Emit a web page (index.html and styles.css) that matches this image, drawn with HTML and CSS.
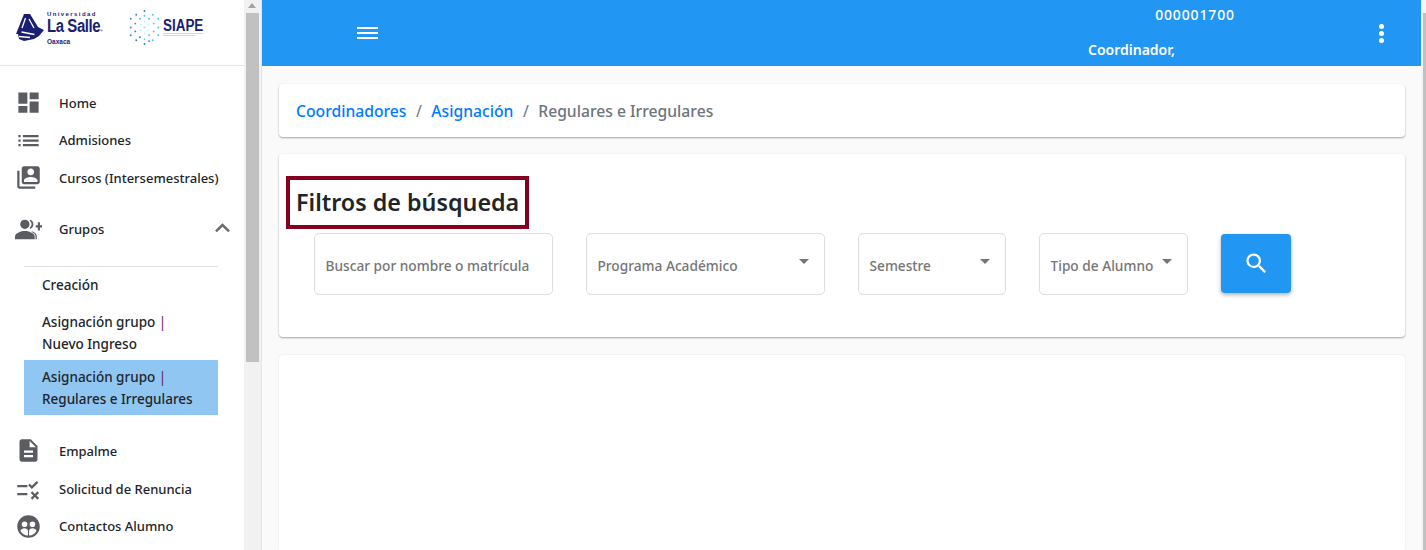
FILE: index.html
```html
<!DOCTYPE html>
<html lang="es">
<head>
<meta charset="utf-8">
<title>SIAPE</title>
<link rel="stylesheet" href="styles.css">
</head>
<body>
<div class="app">
  <aside class="sidebar">
    <div class="side-scroll">
      <div class="logos">
        <svg class="logo-ls" width="28" height="27" viewBox="0 0 28 27">
          <path fill="#1b1f73" d="M8 0h6l8 13 6 3-5 6-5 3-10 2-5-2-1-5H0l2-5z"/>
          <path fill="none" stroke="#fff" stroke-width="1.300" d="M9.500 4 6 14M13 5l5 9M5.500 18l13 2.500M3 22.500l11 1"/>
        </svg>
        <div class="ls-text">
          <span class="ls-uni">Universidad</span>
          <span class="ls-name">La Salle<small>®</small></span>
          <span class="ls-city">Oaxaca</span>
        </div>
        <svg class="logo-dots" width="33" height="37" viewBox="0 0 36 38" preserveAspectRatio="none">
          <g fill="#2f7fd0"><circle cx="18" cy="2" r="1"/><circle cx="18" cy="36" r="1"/><circle cx="3" cy="10" r="1"/><circle cx="3" cy="19" r="1"/><circle cx="3" cy="27" r="1"/><circle cx="9" cy="6" r="1"/><circle cx="9" cy="32" r="1"/><circle cx="8" cy="15" r="1"/><circle cx="8" cy="23" r="1"/><circle cx="13" cy="29" r="1"/><circle cx="23" cy="33" r="1"/></g>
          <g fill="#35c9ee"><circle cx="27" cy="6" r="1"/><circle cx="33" cy="10" r="1"/><circle cx="33" cy="19" r="1"/><circle cx="33" cy="27" r="1"/><circle cx="27" cy="32" r="1"/><circle cx="18" cy="7" r="1"/><circle cx="28" cy="15" r="1"/><circle cx="28" cy="23" r="1"/><circle cx="23" cy="10" r="1"/><circle cx="13" cy="10" r="1"/><circle cx="23" cy="27" r="1"/><circle cx="18" cy="31" r=".8"/></g>
          <g fill="#8fe3f2"><circle cx="18" cy="13" r=".7"/><circle cx="14" cy="16" r=".7"/><circle cx="22" cy="16" r=".7"/><circle cx="18" cy="19" r="1"/><circle cx="14" cy="22" r=".7"/><circle cx="22" cy="22" r=".7"/><circle cx="18" cy="25" r=".7"/></g>
        </svg>
        <div class="siape">
          <span class="siape-name">SIAPE</span>
          <span class="siape-line"></span>
          <span class="siape-line short"></span>
        </div>
      </div>

      <nav class="menu">
        <a class="item">
          <svg class="ico" viewBox="0 0 24 24"><path d="M3 13h8V3H3zm0 8h8v-6H3zm10 0h8V11h-8zm0-18v6h8V3z"/></svg>
          <span>Home</span>
        </a>
        <a class="item">
          <svg class="ico" viewBox="0 0 24 24"><path d="M3 13h2v-2H3zm0 4h2v-2H3zm0-8h2V7H3zm4 4h14v-2H7zm0 4h14v-2H7zM7 7v2h14V7z"/></svg>
          <span>Admisiones</span>
        </a>
        <a class="item">
          <svg class="ico" viewBox="0 0 24 24"><path d="M4 6H2v14c0 1.100.9 2 2 2h14v-2H4zm16-4H8c-1.100 0-2 .9-2 2v12c0 1.100.9 2 2 2h12c1.100 0 2-.9 2-2V4c0-1.100-.9-2-2-2zm-6 2c1.660 0 3 1.340 3 3s-1.340 3-3 3-3-1.340-3-3 1.340-3 3-3zm6 12H8v-1.500c0-1.990 4-3 6-3s6 1.010 6 3z"/></svg>
          <span>Cursos (Intersemestrales)</span>
        </a>
        <a class="item group">
          <svg class="ico" viewBox="0 0 26 24"><path d="M9.500 11.500a4.500 4.500 0 1 0 0-9 4.500 4.500 0 0 0 0 9zM0 21.500h19v-2.800c0-3.400-6.200-5.200-9.500-5.200S0 15.300 0 18.700z"/><path d="M14.800 2.600a4.800 4.800 0 0 1 0 8.800l-.7-1a4 4 0 0 0 0-6.800zM16 13.700c2.600.8 5 2.300 5 5v2.800h-1.200v-2.800c0-2-1.800-3.600-3.800-4.200zM22 8V5h2v3h2v2h-2v3h-2v-3h-2V8z"/></svg>
          <span class="grow">Grupos</span>
          <svg class="chev" viewBox="0 0 24 24"><path d="M12 7 3.500 15.500l2 2L12 11l6.500 6.500 2-2z"/></svg>
        </a>
        <div class="submenu">
          <a class="sub single">Creación</a>
          <a class="sub">Asignación grupo <i>|</i><br>Nuevo Ingreso</a>
          <a class="sub active">Asignación grupo <i>|</i><br>Regulares e Irregulares</a>
        </div>
        <a class="item after">
          <svg class="ico" viewBox="0 0 24 24"><path d="M14 2H6c-1.100 0-2 .9-2 2v16c0 1.100.9 2 2 2h12c1.100 0 2-.9 2-2V8zm2 16H8v-2h8zm0-4H8v-2h8zm-3-5V3.500L18.500 9z"/></svg>
          <span>Empalme</span>
        </a>
        <a class="item renuncia">
          <svg class="ico" viewBox="0 0 24 24"><path d="M2 8h9v2H2zm0 7h9v2H2zM15 11.500 11.700 8.200l1.400-1.400 1.900 1.900 4.300-4.200 1.400 1.400zM15.400 21l-1.400-1.400 2.300-2.300-2.300-2.300 1.400-1.400 2.300 2.300 2.300-2.300 1.400 1.400-2.300 2.300 2.300 2.300-1.400 1.400-2.300-2.300z"/></svg>
          <span>Solicitud de Renuncia</span>
        </a>
        <a class="item">
          <svg class="ico" viewBox="0 0 24 24"><path fill-rule="evenodd" d="M12 2a10 10 0 1 0 0 20 10 10 0 0 0 0-20zM8.500 7.500a2.500 2.500 0 1 1 0 5 2.500 2.500 0 0 1 0-5zm7 0a2.500 2.500 0 1 1 0 5 2.500 2.500 0 0 1 0-5zM4.800 15.800c.5-1.400 2.200-2.200 3.700-2.200s2.800.8 3 2.200v4.300a8.300 8.300 0 0 1-6.700-4.300zm7.700 4.300v-4.300c.2-1.400 1.500-2.200 3-2.200s3.200.8 3.700 2.200a8.300 8.300 0 0 1-6.700 4.300z"/></svg>
          <span>Contactos Alumno</span>
        </a>
      </nav>
    </div>
    <div class="scrollbar side-bar">
      <span class="arrow"></span>
      <span class="thumb"></span>
    </div>
  </aside>

  <div class="main">
    <header class="topbar">
      <button class="burger" aria-label="Menú"><span></span><span></span><span></span></button>
      <div class="user">
        <div class="user-id">000001700</div>
        <div class="user-role">Coordinador,</div>
      </div>
      <div class="kebab"><span></span><span></span><span></span></div>
    </header>

    <div class="content">
      <div class="card crumbs">
        <a>Coordinadores</a><em>/</em><a>Asignación</a><em>/</em><b>Regulares e Irregulares</b>
      </div>

      <section class="card filters">
        <h1 class="title">Filtros de búsqueda</h1>
        <div class="row">
          <div class="field f-search"><span>Buscar por nombre o matrícula</span></div>
          <div class="field f-prog"><span>Programa Académico</span><i class="caret"></i></div>
          <div class="field f-sem"><span>Semestre</span><i class="caret"></i></div>
          <div class="field f-tipo"><span>Tipo de Alumno</span><i class="caret"></i></div>
          <button class="search" aria-label="Buscar">
            <svg viewBox="0 0 24 24" width="27" height="27"><path fill="#fff" d="M15.500 14h-.79l-.28-.27A6.471 6.471 0 0 0 16 9.500 6.500 6.500 0 1 0 9.500 16c1.610 0 3.090-.59 4.230-1.570l.27.28v.79l5 4.990L20.490 19l-4.990-5zm-6 0C7.010 14 5 11.990 5 9.500S7.010 5 9.500 5 14 7.010 14 9.500 11.990 14 9.500 14z"/></svg>
          </button>
        </div>
      </section>

      <section class="card results"></section>
    </div>
  </div>

  <div class="scrollbar page-bar"><span class="page-thumb"></span></div>
</div>
</body>
</html>
```

FILE: styles.css
```css
* { box-sizing: border-box; }
html, body { margin: 0; height: 100%; overflow: hidden; }
body { font-family: "Noto Sans", "Open Sans", sans-serif; color: #212529; background: #fafafa; }

.app { display: flex; height: 550px; }

.sidebar { display: flex; flex: 0 0 262px; background: #fff; height: 550px; overflow: hidden; }
.side-scroll { flex: 0 0 244px; min-width: 0; }

.logos { height: 66px; display: flex; align-items: center; padding: 0 0 10px 16px; border-bottom: 1px solid #e5e5e5; }
.logo-ls { flex: none; margin-right: 3px; }
.ls-text { display: flex; flex-direction: column; color: #1b1f73; width: 81px; margin-top: 1px; font-family: "Liberation Sans", sans-serif; }
.ls-uni { font-size: 6px; letter-spacing: 1.400px; line-height: 9px; font-weight: 700; }
.ls-name { display: block; font-size: 18px; line-height: 15px; letter-spacing: -.5px; font-weight: 700; white-space: nowrap; transform: scaleX(.83); transform-origin: left center; }
.ls-name small { font-size: 4px; }
.ls-city { font-size: 6.500px; line-height: 8px; font-weight: 700; }
.logo-dots { flex: none; margin-right: 2px; }
.siape { display: flex; flex-direction: column; gap: 1px; }
.siape-name { display: block; font-family: "Liberation Sans", sans-serif; font-weight: 700; font-size: 16px; line-height: 13px; color: #1b1f73; transform: scaleX(.84); transform-origin: left center; }
.siape-line { display: block; height: 1px; width: 40px; background: #a6e8f3; }
.siape-line.short { width: 32px; }

.menu { display: flex; flex-direction: column; padding-top: 18px; }
.item { display: flex; align-items: center; height: 37.500px; padding: 0 11px 0 15px; font-size: 13px; font-weight: 500; color: #212529; }
.item.group { height: 40px; margin-top: 12.500px; }
.item.after { margin-top: 17px; }
.item.renuncia { height: 38px; padding-top: 1px; }
.ico { width: 27px; height: 27px; flex: none; margin-right: 17px; fill: #5a5c62; }
.grow { flex: 1 1 auto; }
.chev { width: 21px; height: 21px; fill: #6b6b6b; margin-top: -3px; }

.submenu { margin: 17px 26px 0 24px; border-top: 1px solid #e0e0e0; display: flex; flex-direction: column; }
.sub { display: block; padding: 7px 18px 5px; font-size: 13.500px; line-height: 22px; font-weight: 500; color: #212529; }
.sub.single { padding-bottom: 8px; }
.sub i { font-style: normal; color: #6a1b5a; font-weight: 400; }
.sub.active { background: #90c6f2; padding: 6px 18px 5px; }

.scrollbar { background: #f1f1f1; }
.side-bar { flex: 0 0 18px; border-right: 1px solid #e4e4e4; }
.arrow { display: block; width: 0; height: 0; margin: 3px 0 0 4px; border: 4px solid transparent; border-top: 0; border-bottom: 5px solid #a3a3a3; }
.thumb { display: block; width: 13px; height: 349px; margin: 5px 0 0 2px; background: #c1c1c1; }

.main { flex: 1 1 auto; min-width: 0; display: flex; flex-direction: column; }
.topbar { height: 66px; background: #2196f3; color: #fff; display: flex; align-items: center; position: relative; flex: none; }
.burger { background: none; border: 0; padding: 0; margin-left: 95px; display: flex; flex-direction: column; gap: 2.500px; width: 21px; }
.burger span { display: block; height: 2.500px; background: #fff; }
.user { position: absolute; left: 826px; top: 6px; width: 214px; font-weight: 600; }
.user-id { font-size: 14px; line-height: 17px; letter-spacing: .85px; text-align: center; font-weight: 500; }
.user-role { font-size: 14px; line-height: 17px; margin-top: 18px; }
.kebab { position: absolute; right: 37px; top: 24px; display: flex; flex-direction: column; gap: 2px; }
.kebab span { width: 5px; height: 5px; border-radius: 50%; background: #fff; }

.content { padding: 18px 16px 0 17px; display: flex; flex-direction: column; gap: 17px; flex: 1 1 auto; min-height: 0; }
.card { background: #fff; border-radius: 4px; box-shadow: 0 1px 2px rgba(0,0,0,.35); }
.crumbs { height: 53px; display: flex; align-items: center; padding-left: 17px; font-size: 15.700px; font-weight: 500; flex: none; }
.crumbs a { color: #007bff; }
.crumbs em { font-style: normal; color: #6c757d; margin: 0 9.500px; font-weight: 400; }
.crumbs b { color: #6c757d; font-weight: 500; }

.filters { height: 183px; padding: 22px 0 0 7px; flex: none; }
.title { display: inline-block; margin: 0; height: 53px; padding: 0 6px; border: 4px solid #85001f; font-size: 23.300px; line-height: 45px; font-weight: 600; color: #212529; vertical-align: top; }
.row { display: flex; align-items: flex-start; padding-left: 28px; margin-top: 4px; }
.field { height: 62px; border: 1px solid #dedede; border-radius: 5px; display: flex; align-items: center; padding: 2px 10.500px 0; position: relative; font-size: 13.700px; font-weight: 500; color: #757575; flex: none; white-space: nowrap; }
.f-search { width: 239px; margin-right: 33px; }
.f-prog { width: 239px; margin-right: 33px; }
.f-sem { width: 148px; margin-right: 33px; }
.f-tipo { width: 149px; margin-right: 33px; }
.caret { position: absolute; right: 15px; top: 25px; width: 0; height: 0; border: 5px solid transparent; border-top: 5px solid #757575; border-bottom: 0; }
.search { width: 70px; height: 59px; margin-top: 1px; background: #2196f3; border: 0; border-radius: 4px; box-shadow: 0 2px 4px rgba(0,0,0,.3); display: flex; align-items: center; justify-content: center; padding: 0; }

.results { flex: 1 1 auto; margin-top: 1px; border-radius: 4px 4px 0 0; box-shadow: 0 0 2px rgba(0,0,0,.12); }

.page-bar { flex: 0 0 5px; background: #f5f5f5; }
.page-thumb { display: block; width: 3px; height: 537px; margin: 13px 0 0 2px; background: #c1c1c1; }
```
